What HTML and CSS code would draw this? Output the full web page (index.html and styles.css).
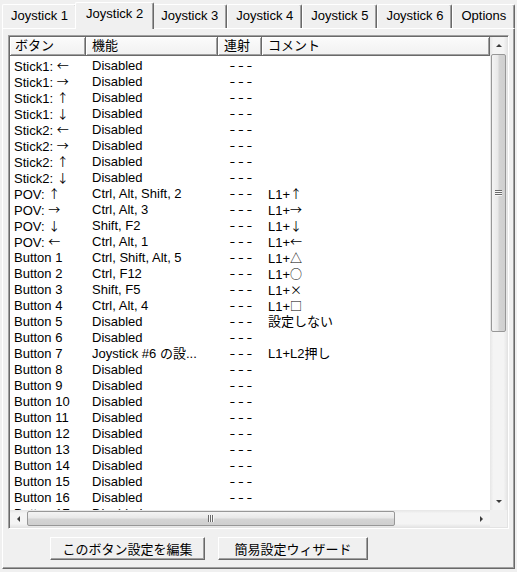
FILE: index.html
```html
<!DOCTYPE html>
<html lang="ja">
<head>
  <meta charset="UTF-8" />
  <title>Joystick 設定</title>
  <link rel="stylesheet" href="styles.css">
</head>
<body>

<div class="tabs">
  <div class="tab">Joystick 1</div>
  <div class="tab active">Joystick 2</div>
  <div class="tab">Joystick 3</div>
  <div class="tab">Joystick 4</div>
  <div class="tab">Joystick 5</div>
  <div class="tab">Joystick 6</div>
  <div class="tab">Options</div>
</div>

<div class="panel">
  <div class="listview">
    <div class="list-main">
      <div class="list-header">
        <div class="hcell c1">ボタン</div>
        <div class="hcell c2">機能</div>
        <div class="hcell c3">連射</div>
        <div class="hcell c4">コメント</div>
      </div>
      <div class="list-rows">
        <div class="row"><span class="c1">Stick1: <span class="ar">←</span></span><span class="c2">Disabled</span><span class="c3"><i>---</i></span><span class="c4"></span></div>
        <div class="row"><span class="c1">Stick1: <span class="ar">→</span></span><span class="c2">Disabled</span><span class="c3"><i>---</i></span><span class="c4"></span></div>
        <div class="row"><span class="c1">Stick1: <span class="ar">↑</span></span><span class="c2">Disabled</span><span class="c3"><i>---</i></span><span class="c4"></span></div>
        <div class="row"><span class="c1">Stick1: <span class="ar">↓</span></span><span class="c2">Disabled</span><span class="c3"><i>---</i></span><span class="c4"></span></div>
        <div class="row"><span class="c1">Stick2: <span class="ar">←</span></span><span class="c2">Disabled</span><span class="c3"><i>---</i></span><span class="c4"></span></div>
        <div class="row"><span class="c1">Stick2: <span class="ar">→</span></span><span class="c2">Disabled</span><span class="c3"><i>---</i></span><span class="c4"></span></div>
        <div class="row"><span class="c1">Stick2: <span class="ar">↑</span></span><span class="c2">Disabled</span><span class="c3"><i>---</i></span><span class="c4"></span></div>
        <div class="row"><span class="c1">Stick2: <span class="ar">↓</span></span><span class="c2">Disabled</span><span class="c3"><i>---</i></span><span class="c4"></span></div>
        <div class="row"><span class="c1">POV: <span class="ar">↑</span></span><span class="c2">Ctrl, Alt, Shift, 2</span><span class="c3"><i>---</i></span><span class="c4">L1+<span class="ar">↑</span></span></div>
        <div class="row"><span class="c1">POV: <span class="ar">→</span></span><span class="c2">Ctrl, Alt, 3</span><span class="c3"><i>---</i></span><span class="c4">L1+<span class="ar">→</span></span></div>
        <div class="row"><span class="c1">POV: <span class="ar">↓</span></span><span class="c2">Shift, F2</span><span class="c3"><i>---</i></span><span class="c4">L1+<span class="ar">↓</span></span></div>
        <div class="row"><span class="c1">POV: <span class="ar">←</span></span><span class="c2">Ctrl, Alt, 1</span><span class="c3"><i>---</i></span><span class="c4">L1+<span class="ar">←</span></span></div>
        <div class="row"><span class="c1">Button 1</span><span class="c2">Ctrl, Shift, Alt, 5</span><span class="c3"><i>---</i></span><span class="c4">L1+<span class="ar">△</span></span></div>
        <div class="row"><span class="c1">Button 2</span><span class="c2">Ctrl, F12</span><span class="c3"><i>---</i></span><span class="c4">L1+<span class="ar">○</span></span></div>
        <div class="row"><span class="c1">Button 3</span><span class="c2">Shift, F5</span><span class="c3"><i>---</i></span><span class="c4">L1+<span class="ar">×</span></span></div>
        <div class="row"><span class="c1">Button 4</span><span class="c2">Ctrl, Alt, 4</span><span class="c3"><i>---</i></span><span class="c4">L1+<span class="ar">□</span></span></div>
        <div class="row"><span class="c1">Button 5</span><span class="c2">Disabled</span><span class="c3"><i>---</i></span><span class="c4">設定しない</span></div>
        <div class="row"><span class="c1">Button 6</span><span class="c2">Disabled</span><span class="c3"><i>---</i></span><span class="c4"></span></div>
        <div class="row"><span class="c1">Button 7</span><span class="c2">Joystick #6 の設...</span><span class="c3"><i>---</i></span><span class="c4">L1+L2押し</span></div>
        <div class="row"><span class="c1">Button 8</span><span class="c2">Disabled</span><span class="c3"><i>---</i></span><span class="c4"></span></div>
        <div class="row"><span class="c1">Button 9</span><span class="c2">Disabled</span><span class="c3"><i>---</i></span><span class="c4"></span></div>
        <div class="row"><span class="c1">Button 10</span><span class="c2">Disabled</span><span class="c3"><i>---</i></span><span class="c4"></span></div>
        <div class="row"><span class="c1">Button 11</span><span class="c2">Disabled</span><span class="c3"><i>---</i></span><span class="c4"></span></div>
        <div class="row"><span class="c1">Button 12</span><span class="c2">Disabled</span><span class="c3"><i>---</i></span><span class="c4"></span></div>
        <div class="row"><span class="c1">Button 13</span><span class="c2">Disabled</span><span class="c3"><i>---</i></span><span class="c4"></span></div>
        <div class="row"><span class="c1">Button 14</span><span class="c2">Disabled</span><span class="c3"><i>---</i></span><span class="c4"></span></div>
        <div class="row"><span class="c1">Button 15</span><span class="c2">Disabled</span><span class="c3"><i>---</i></span><span class="c4"></span></div>
        <div class="row"><span class="c1">Button 16</span><span class="c2">Disabled</span><span class="c3"><i>---</i></span><span class="c4"></span></div>
        <div class="row"><span class="c1">Button 17</span><span class="c2">Disabled</span><span class="c3"><i>---</i></span><span class="c4"></span></div>
      </div>
    </div>

    <!-- vertical scrollbar -->
    <div class="vscroll">
      <div class="sb-btn"><span class="tri up"></span></div>
      <div class="thumb v-thumb"><span class="grip"></span></div>
      <div class="track"></div>
      <div class="sb-btn"><span class="tri down"></span></div>
    </div>

    <!-- horizontal scrollbar -->
    <div class="hscroll">
      <div class="sb-btn"><span class="tri left"></span></div>
      <div class="thumb h-thumb"><span class="grip"></span></div>
      <div class="track"></div>
      <div class="sb-btn"><span class="tri right"></span></div>
    </div>
    <div class="corner"></div>
  </div>

  <div class="actions">
    <button class="btn btn-edit">このボタン設定を編集</button>
    <button class="btn btn-wizard">簡易設定ウィザード</button>
  </div>
</div>

</body>
</html>
```

FILE: styles.css
```css
:root {
  --face: #f0f0f0;
  --light: #ffffff;
  --shadow: #a0a0a0;
  --dark: #696969;
  --text: #000000;
}

* {
  box-sizing: border-box;
}

body {
  margin: 0;
  width: 517px;
  height: 572px;
  overflow: hidden;
  background: var(--face);
  color: var(--text);
  font-family: "Liberation Sans", "Noto Sans CJK JP", sans-serif;
  font-size: 13px;
}

/* ---- tab strip ---- */
.tabs {
  display: flex;
  align-items: flex-end;
  height: 28px;
  padding: 0 2px;
  position: relative;
  z-index: 2;
}

.tab {
  height: 24px;
  padding: 0 8px;
  line-height: 22px;
  border-top: 1px solid var(--light);
  border-left: 1px solid var(--light);
  border-right: 1px solid var(--dark);
  border-radius: 2px 2px 0 0;
  box-shadow: inset -1px 0 var(--shadow);
  background: var(--face);
  white-space: nowrap;
}

.tab.active {
  height: 27px;
  margin: 0 -2px -1px;
  padding: 0 10px;
  line-height: 22px;
  position: relative;
  z-index: 1;
}

/* ---- tab page ---- */
.panel {
  margin: 0 2px;
  height: 541px;
  padding: 6px 5px 0;
  border: 1px solid;
  border-color: var(--light) var(--dark) var(--dark) var(--light);
  box-shadow: inset -1px -1px var(--shadow);
}

/* ---- list view ---- */
.listview {
  display: grid;
  grid-template-columns: 1fr 17px;
  grid-template-rows: 1fr 17px;
  height: 494px;
  background: #fff;
  border: 1px solid;
  border-color: var(--shadow) var(--light) var(--light) var(--shadow);
  box-shadow: inset 1px 1px var(--dark), inset -1px -1px #e3e3e3;
  padding: 1px;
}

.list-main {
  overflow: hidden;
  background: #fff;
}

.list-header {
  display: grid;
  grid-template-columns: 76px 132px 44px 1fr;
  height: 19px;
}

.hcell {
  line-height: 17px;
  padding-left: 6px;
  background: linear-gradient(#fbfbfb, #f1f1f1);
  border-right: 1px solid var(--dark);
  border-bottom: 1px solid var(--dark);
  box-shadow: inset 1px 1px var(--light), inset -1px -1px var(--shadow);
  white-space: nowrap;
}

.hcell.c1 {
  padding-left: 5px;
}

.list-rows {
  padding-top: 2px;
}

.row {
  display: grid;
  grid-template-columns: 76px 132px 44px 1fr;
  height: 16px;
  line-height: 16px;
  white-space: nowrap;
}

.row span {
  overflow: hidden;
}

.row .c1 {
  padding-left: 4px;
}

.row .c2,
.row .c4 {
  padding-left: 6px;
}

/* the "---" placeholder uses long, tight dashes */
.row .c3 {
  text-align: center;
}

.row .c3 i {
  display: inline-block;
  font-style: normal;
  font-family: "DejaVu Sans Mono", monospace;
  font-size: 13px;
  letter-spacing: -1px;
  transform: scaleX(1.25);
}

.row .ar {
  font-family: "Noto Sans CJK JP", sans-serif;
  font-size: 12px;
}

/* ---- scrollbars ---- */
.vscroll,
.hscroll {
  display: flex;
  background: linear-gradient(to right, #e6e6e6, #f4f4f4 20%, #f4f4f4 80%, #e6e6e6);
}

.vscroll {
  flex-direction: column;
}

.hscroll {
  background: linear-gradient(#e6e6e6, #f4f4f4 20%, #f4f4f4 80%, #e6e6e6);
}

.sb-btn {
  flex: 0 0 17px;
  display: flex;
  align-items: center;
  justify-content: center;
}

.track {
  flex: 1;
}

.thumb {
  display: flex;
  align-items: center;
  justify-content: center;
  border: 1px solid #979797;
  border-radius: 2px;
  margin: 0 1px;
}

.v-thumb {
  flex: 0 0 278px;
  background: linear-gradient(to right, #f4f4f4, #e8e8e8 45%, #d4d4d4 55%, #cfcfcf);
}

.h-thumb {
  flex: 0 0 368px;
  margin: 1px 0;
  background: linear-gradient(#f4f4f4, #e8e8e8 45%, #d4d4d4 55%, #cfcfcf);
}

.grip {
  width: 7px;
  height: 6px;
  background: repeating-linear-gradient(#6a6a6a 0 1px, #f8f8f8 1px 2px);
}

.h-thumb .grip {
  width: 6px;
  height: 7px;
  background: repeating-linear-gradient(to right, #6a6a6a 0 1px, #f8f8f8 1px 2px);
}

.tri {
  width: 0;
  height: 0;
  border: 3px solid transparent;
}

.tri.up { border-bottom: 3px solid #3c3c3c; border-top-width: 0; }
.tri.down { border-top: 3px solid #3c3c3c; border-bottom-width: 0; }
.tri.left { border-right: 3px solid #3c3c3c; border-left-width: 0; }
.tri.right { border-left: 3px solid #3c3c3c; border-right-width: 0; }

.corner {
  background: var(--face);
}

/* ---- buttons under the list ---- */
.actions {
  display: flex;
  gap: 13px;
  margin-top: 8px;
  padding-left: 42px;
}

.btn {
  height: 23px;
  padding: 0;
  font-family: "Noto Sans CJK JP", sans-serif;
  font-size: 13px;
  color: var(--text);
  background: var(--face);
  border: 1px solid;
  border-color: var(--light) var(--dark) var(--dark) var(--light);
  box-shadow: inset -1px -1px var(--shadow);
}

.btn-edit {
  width: 155px;
}

.btn-wizard {
  width: 150px;
}
```
